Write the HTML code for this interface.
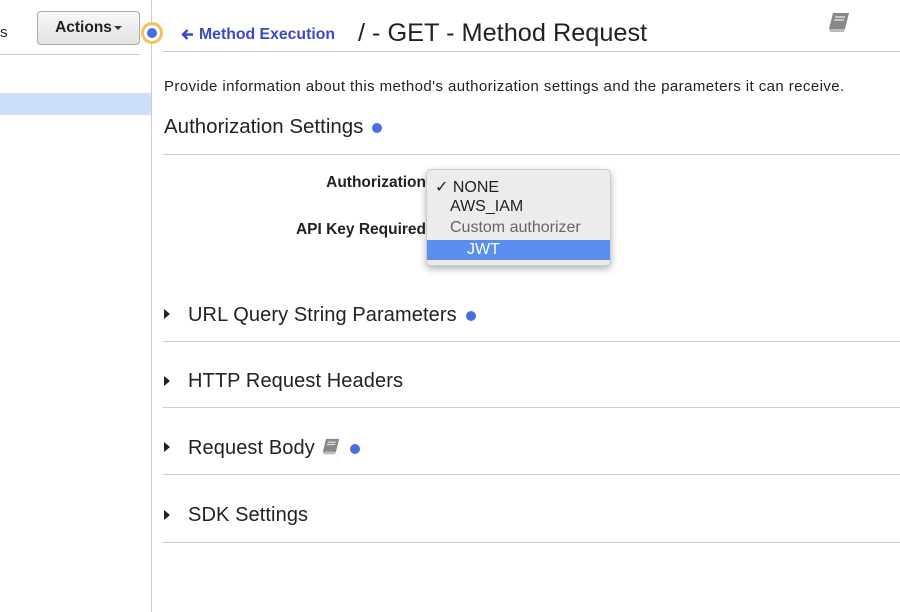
<!DOCTYPE html>
<html><head><style>
body{margin:0;width:900px;height:612px;background:#fff;position:relative;overflow:hidden;font-family:"Liberation Sans",sans-serif;color:#222}
.a{position:absolute;white-space:nowrap}
.hl{position:absolute;left:163px;width:737px;height:1px;background:#ccc}
.sec{position:absolute;left:188px;font-size:20px;letter-spacing:.1px;line-height:22px}
.tri{position:absolute;left:164px;width:0;height:0;border-left:6px solid #222;border-top:5px solid transparent;border-bottom:5px solid transparent}
.dot{display:inline-block;width:10px;height:10px;border-radius:50%;background:#4a6ee0;vertical-align:middle;margin-left:9px}
.lbl{position:absolute;right:474px;font-size:15.5px;font-weight:bold}
</style></head><body>
<div class="a" style="left:0;top:24px;font-size:15px">s</div>
<div class="a" style="left:37px;top:11px;width:101px;height:32px;border:1px solid #aaa;border-radius:4px;background:linear-gradient(#f8f8f8,#e2e2e2);font-size:15.5px;font-weight:bold;line-height:32px;text-align:center">Actions<span style="display:inline-block;border-top:4px solid #333;border-left:4px solid transparent;border-right:4px solid transparent;vertical-align:middle;margin-left:2px"></span></div>
<div class="a" style="left:0;top:54px;width:140px;height:1px;background:#ccc"></div>
<div class="a" style="left:0;top:93px;width:151px;height:22px;background:#cde0fb"></div>
<div class="a" style="left:151px;top:0;width:1px;height:612px;background:#ccc"></div>
<div class="a" style="left:141px;top:22px;width:16px;height:16px;border:3px solid #f2c35a;border-radius:50%;background:#fff"></div>
<div class="a" style="left:147px;top:28px;width:10px;height:10px;border-radius:50%;background:#4a6ee0"></div>
<svg class="a" style="left:181px;top:28px" width="13" height="13" viewBox="0 0 13 13"><path d="M12 6.5H2M6.5 2L2 6.5 6.5 11" stroke="#3b48c8" stroke-width="2.4" fill="none"/></svg>
<div class="a" style="left:199px;top:26px;font-size:15.8px;font-weight:bold;color:#3b48c8">Method Execution</div>
<div class="a" style="left:358px;top:19px;font-size:25.3px;color:#222">/ - GET - Method Request</div>
<svg class="a" style="left:827px;top:12px" width="24" height="22" viewBox="0 0 24 22"><path d="M6 1h16l-4 16H2z" fill="#888"/><path d="M2 17h16l-1 3H3z" fill="#bbb"/><path d="M8 5h10M7 8h10" stroke="#ddd" stroke-width="1.5"/></svg>
<div class="hl" style="top:51px"></div>
<div class="a" style="left:164px;top:78px;font-size:15px;letter-spacing:.42px">Provide information about this method's authorization settings and the parameters it can receive.</div>
<div class="a" style="left:164px;top:115px;font-size:20.5px">Authorization Settings<span class="dot"></span></div>
<div class="hl" style="top:154px"></div>
<div class="lbl" style="top:174px">Authorization</div>
<div class="lbl" style="top:221px">API Key Required</div>
<div class="a" style="left:426px;top:169px;width:183px;height:95px;background:#ececec;border:1px solid #ccc;border-radius:5px;box-shadow:0 3px 8px rgba(0,0,0,.3);font-size:16px">
<div class="a" style="left:8px;top:7px">&#10003; NONE</div>
<div class="a" style="left:23px;top:28px">AWS_IAM</div>
<div class="a" style="left:23px;top:49px;color:#666">Custom authorizer</div>
<div class="a" style="left:0;top:70px;width:183px;height:20px;background:#5a8ff0;color:#fff"><span style="position:absolute;left:40px;top:1px">JWT</span></div>
</div>
<div class="tri" style="top:309px"></div><div class="sec" style="top:304px">URL Query String Parameters<span class="dot"></span></div>
<div class="hl" style="top:341px"></div>
<div class="tri" style="top:376px"></div><div class="sec" style="top:370px">HTTP Request Headers</div>
<div class="hl" style="top:407px"></div>
<div class="tri" style="top:442px"></div><div class="sec" style="top:437px">Request Body <svg width="20" height="18" viewBox="0 0 24 22" style="vertical-align:-2px"><path d="M6 1h16l-4 16H2z" fill="#888"/><path d="M2 17h16l-1 3H3z" fill="#bbb"/><path d="M8 5h10M7 8h10" stroke="#ddd" stroke-width="1.5"/></svg><span class="dot"></span></div>
<div class="hl" style="top:474px"></div>
<div class="tri" style="top:510px"></div><div class="sec" style="top:504px">SDK Settings</div>
<div class="hl" style="top:542px"></div>
</body></html>
